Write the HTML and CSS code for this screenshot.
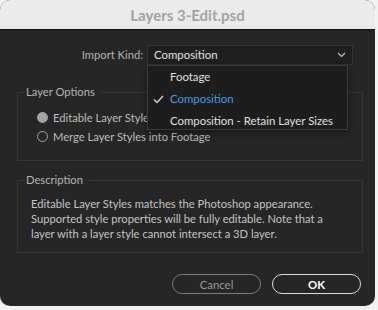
FILE: index.html
```html
<!DOCTYPE html>
<html>
<head>
<meta charset="utf-8">
<link rel="stylesheet" href="styles.css">
</head>
<body>
<div class="window">
  <div class="titlebar">Layers 3-Edit.psd</div>
  <div class="content">
    <div class="import-row">
      <span class="import-label">Import Kind:</span>
      <div class="select">
        <span>Composition</span>
        <svg class="chev" width="9" height="6" viewBox="0 0 9 6"><path d="M1 1 L4.5 4.5 L8 1" fill="none" stroke="#bdbdbd" stroke-width="1.2"/></svg>
        <div class="menu">
          <div class="item">Footage</div>
          <div class="item selected"><svg class="check" width="11" height="9" viewBox="0 0 11 9"><path d="M1 4.5 L4 7.5 L10 1" fill="none" stroke="#d8d8d8" stroke-width="1.4"/></svg>Composition</div>
          <div class="item">Composition - Retain Layer Sizes</div>
        </div>
      </div>
    </div>
    <fieldset class="group options">
      <legend>Layer Options</legend>
      <div class="radio-row"><span class="radio on"></span>Editable Layer Styles</div>
      <div class="radio-row"><span class="radio"></span>Merge Layer Styles into Footage</div>
    </fieldset>
    <fieldset class="group desc">
      <legend>Description</legend>
      <p>Editable Layer Styles matches the Photoshop appearance.<br>Supported style properties will be fully editable. Note that a<br>layer with a layer style cannot intersect a 3D layer.</p>
    </fieldset>
    <div class="buttons">
      <button class="btn cancel">Cancel</button>
      <button class="btn ok">OK</button>
    </div>
  </div>
</div>
</body>
</html>
```
FILE: styles.css
```css
html, body {
  margin: 0;
  padding: 0;
  background: #f2f2f2;
}
body {
  font-family: "Lato", "Open Sans", sans-serif;
  font-size: 11.2px;
  line-height: 14px;
  width: 378px;
  height: 310px;
}
.window {
  width: 375px;
  height: 306px;
  border-radius: 10px;
  overflow: hidden;
  background: #262626;
  display: flex;
  flex-direction: column;
}
.titlebar {
  height: 29px;
  flex: none;
  background: #ebebeb;
  border-bottom: 1px solid #111;
  color: #a3a3a3;
  font-weight: bold;
  font-size: 15px;
  display: flex;
  align-items: center;
  justify-content: center;
}
.content {
  padding: 15px 13px 0 17px;
  display: flex;
  flex-direction: column;
}
.import-row {
  display: flex;
  align-items: center;
  height: 20px;
}
.import-label {
  width: 126px;
  text-align: right;
  color: #b4b4b4;
  padding-right: 4px;
}
.select {
  position: relative;
  width: 198px;
  height: 18px;
  background: #1f1f1f;
  border: 1px solid #333;
  color: #e2e2e2;
  display: flex;
  align-items: center;
  padding-left: 6px;
  box-sizing: content-box;
  font-size: 11.4px;
}
.select span { flex: 1; }
.chev { margin-right: 6px; }
.menu {
  position: absolute;
  left: -1px;
  top: 19px;
  width: 199px;
  height: 63px;
  background: #1d1d1d;
  border: 1px solid #3a3a3a;
  z-index: 5;
  box-shadow: 0 3px 8px rgba(0,0,0,0.4);
}
.item {
  height: 22px;
  line-height: 21px;
  padding-left: 22px;
  color: #e0e0e0;
  position: relative;
}
.item.selected { color: #4b9be0; }
.check {
  position: absolute;
  left: 5px;
  top: 7px;
}
.group {
  margin: 0;
  border: 1px solid #363636;
  padding: 0 0 0 7px;
  width: 337px;
}
.group legend {
  padding: 0 6px 0 1px;
  color: #b4b4b4;
}
.options {
  margin-top: 20px;
  height: 74px;
}
.radio-row {
  display: flex;
  align-items: center;
  color: #bdbdbd;
  height: 19px;
  margin-left: 12px;
}
.radio-row:first-of-type { margin-top: 9px; }
.radio {
  width: 11px;
  height: 11px;
  border-radius: 50%;
  box-sizing: border-box;
  border: 1.5px solid #a4a4a4;
  margin-right: 5px;
}
.radio.on {
  background: #a4a4a4;
}
.desc {
  margin-top: 12px;
  height: 78px;
}
.desc p {
  margin: 9px 0 0 6px;
  color: #c4c4c4;
  line-height: 15px;
}
.buttons {
  display: flex;
  justify-content: flex-end;
  gap: 11px;
  margin-top: 21px;
  padding-right: 1px;
}
.btn {
  width: 89px;
  height: 20px;
  border-radius: 10px;
  background: transparent;
  font-family: inherit;
  font-size: 11.4px;
  padding: 0;
}
.cancel {
  border: 1.5px solid #7c7c7c;
  color: #9a9a9a;
}
.ok {
  border: 1.5px solid #dcdcdc;
  color: #ffffff;
  font-weight: bold;
}
```
